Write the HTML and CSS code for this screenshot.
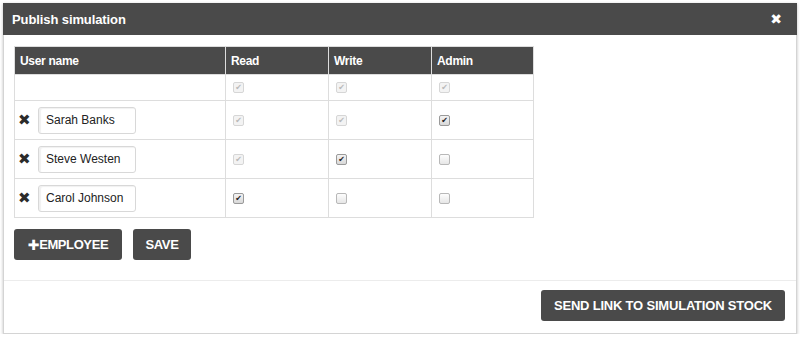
FILE: index.html
```html
<!DOCTYPE html>
<html>
<head>
<meta charset="utf-8">
<link rel="stylesheet" href="styles.css">
</head>
<body>
<div class="dialog">
  <div class="dialog-header">
    <span class="dialog-title">Publish simulation</span>
    <span class="close">&#x2716;</span>
  </div>
  <div class="dialog-body">
    <table class="perm">
      <thead>
        <tr><th class="c-user">User name</th><th class="c-perm">Read</th><th class="c-perm">Write</th><th class="c-last">Admin</th></tr>
      </thead>
      <tbody>
        <tr class="row-first">
          <td></td>
          <td><span class="cb cb-dis">&#x2714;</span></td>
          <td><span class="cb cb-dis">&#x2714;</span></td>
          <td><span class="cb cb-dis">&#x2714;</span></td>
        </tr>
        <tr>
          <td><div class="user"><span class="remove">&#x2716;</span><span class="name-input">Sarah Banks</span></div></td>
          <td><span class="cb cb-dis">&#x2714;</span></td>
          <td><span class="cb cb-dis">&#x2714;</span></td>
          <td><span class="cb cb-on">&#x2714;</span></td>
        </tr>
        <tr>
          <td><div class="user"><span class="remove">&#x2716;</span><span class="name-input">Steve Westen</span></div></td>
          <td><span class="cb cb-dis">&#x2714;</span></td>
          <td><span class="cb cb-on">&#x2714;</span></td>
          <td><span class="cb"></span></td>
        </tr>
        <tr>
          <td><div class="user"><span class="remove">&#x2716;</span><span class="name-input">Carol Johnson</span></div></td>
          <td><span class="cb cb-on">&#x2714;</span></td>
          <td><span class="cb"></span></td>
          <td><span class="cb"></span></td>
        </tr>
      </tbody>
    </table>
    <div class="actions">
      <button class="btn btn-emp"><span class="plus">&#x271A;</span>EMPLOYEE</button>
      <button class="btn btn-save">SAVE</button>
    </div>
  </div>
  <div class="dialog-footer">
    <button class="btn btn-send">SEND LINK TO SIMULATION STOCK</button>
  </div>
</div>
</body>
</html>
```
FILE: styles.css
```css
* { box-sizing: border-box; }
html, body { margin: 0; padding: 0; background: #fff; }
body {
  font-family: "Liberation Sans", Arial, sans-serif;
  color: #333;
  padding: 3px 3px 0 3px;
}
.dialog {
  width: 794px;
  height: 331px;
  border: 1px solid #d4d4d4;
  border-top: none;
  box-shadow: 0 1px 3px rgba(0,0,0,0.25);
  display: flex;
  flex-direction: column;
  background: #fff;
}
.dialog-header {
  height: 32px;
  background: #4a4a4a;
  color: #fff;
  display: flex;
  align-items: center;
  justify-content: space-between;
  padding: 0 15px 0 9px;
  margin: 0 -1px;
}
.dialog-title {
  font-size: 13px;
  font-weight: bold;
  letter-spacing: -0.1px;
}
.close {
  font-size: 14px;
  font-weight: bold;
  font-family: "DejaVu Sans", sans-serif;
  line-height: 1;
}
.dialog-body {
  padding: 11px 10px 20px 10px;
  border-bottom: 1px solid #ececec;
}
.perm {
  border-collapse: collapse;
  font-size: 12px;
}
.perm th {
  background: #4a4a4a;
  color: #fff;
  text-align: left;
  font-weight: bold;
  font-size: 12px;
  height: 28px;
  padding: 0 5px;
  border: 1px solid #ddd;
  letter-spacing: -0.3px;
}
.c-user { width: 211px; }
.c-perm { width: 103px; }
.c-last { width: 102px; }
.perm td {
  border: 1px solid #ddd;
  height: 39px;
  padding: 0 7px;
  vertical-align: middle;
}
.perm .row-first td { height: 26px; }
.user {
  display: flex;
  align-items: center;
  gap: 7px;
  margin-left: -4px;
}
.remove {
  font-family: "DejaVu Sans", sans-serif;
  font-size: 15px;
  font-weight: bold;
  color: #2b2b2b;
  width: 13px;
  line-height: 1;
}
.name-input {
  display: block;
  width: 98px;
  height: 27px;
  line-height: 25px;
  border: 1px solid #d8d8d8;
  border-radius: 3px;
  padding: 0 7px;
  font-size: 12px;
  color: #222;
  box-shadow: inset 2px 1px 1px rgba(0,0,0,0.06);
  white-space: nowrap;
}
.cb {
  display: block;
  width: 11px;
  height: 11px;
  border: 1px solid #b8b8b8;
  border-radius: 2px;
  background: linear-gradient(#fdfdfd, #e6e6e6);
  font-family: "DejaVu Sans", sans-serif;
  font-size: 8px;
  line-height: 10px;
  text-align: center;
  color: transparent;
  overflow: hidden;
}
.cb-dis {
  border-color: #d6d6d6;
  background: #f3f3f3;
  color: #b9b9b9;
}
.cb-on {
  border-color: #9a9a9a;
  background: linear-gradient(#f4f4f4, #d8d8d8);
  color: #222;
}
.actions {
  display: flex;
  gap: 11px;
  margin-top: 11px;
}
.btn {
  background: #4a4a4a;
  color: #fff;
  border: none;
  border-radius: 3px;
  font-family: "Liberation Sans", Arial, sans-serif;
  font-weight: bold;
  font-size: 13px;
  height: 31px;
  padding: 0;
  letter-spacing: -0.4px;
  display: inline-flex;
  align-items: center;
  justify-content: center;
}
.btn-emp { width: 108px; }
.plus {
  font-family: "DejaVu Sans", sans-serif;
  font-size: 14px;
}
.btn-save { width: 58px; }
.dialog-footer {
  flex: 1;
  display: flex;
  justify-content: flex-end;
  align-items: flex-start;
  padding: 9px 11px 0 0;
}
.btn-send {
  width: 244px;
  height: 31px;
  font-size: 13px;
  letter-spacing: -0.2px;
}
```
